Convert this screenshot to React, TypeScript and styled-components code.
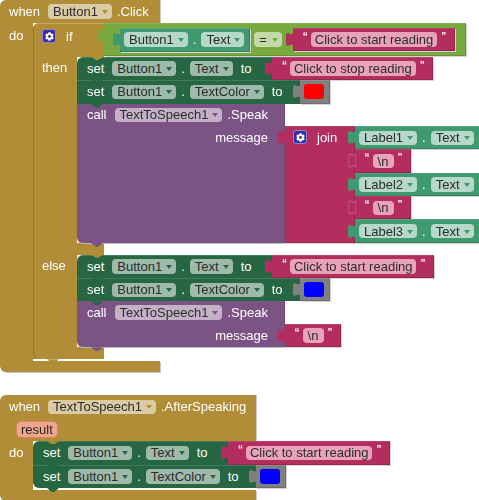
import React from "react";
import styled, { createGlobalStyle } from "styled-components";
import { FaCog } from "react-icons/fa";

const BROWN = "#b08d36";
const DARK_GREEN = "#266643";
const GET_GREEN = "#3f9a70";
const LOGIC_GREEN = "#78aa40";
const PURPLE = "#7c5385";
const PINK = "#b32d5e";
const GREY = "#808080";
const ROW = 23.33;

const GlobalStyle = createGlobalStyle`
  html, body {
    margin: 0;
    padding: 0;
    background: #fff;
  }
`;

const Canvas = styled.div`
  width: 479px;
  height: 500px;
  overflow: hidden;
  display: flex;
  flex-direction: column;
  gap: 23px;
  font-family: "Liberation Sans", Arial, sans-serif;
  font-size: 13px;
  color: #fff;
  filter: blur(0.3px);
`;

const Hat = styled.div`
  display: flex;
  flex-direction: column;
  align-items: flex-start;
`;

const HatHead = styled.div<{ $w: number; $h: number }>`
  width: ${(p) => p.$w}px;
  height: ${(p) => p.$h}px;
  background: ${BROWN};
  border-radius: 6px 0 0 0;
  box-shadow: 1px 0 0 #c9c9c9;
  padding-left: 6px;
  box-sizing: border-box;
`;

const HeadLine = styled.div`
  display: flex;
  align-items: center;
  gap: 5px;
  height: 23px;
`;

const ParamLine = styled.div`
  display: flex;
  padding: 3px 0 0 10px;
`;

const Param = styled.span`
  height: 15px;
  line-height: 15px;
  padding: 0 4px;
  background: #eda78f;
  border: 1px solid #e0805f;
  border-radius: 5px;
  color: #2b2320;
`;

const HatBody = styled.div`
  display: flex;
  align-items: flex-start;
`;

const Spine = styled.div<{ $w: number; $left: number; $top: number }>`
  width: ${(p) => p.$w}px;
  align-self: stretch;
  flex-shrink: 0;
  box-sizing: border-box;
  padding: ${(p) => p.$top}px 0 0 ${(p) => p.$left}px;
  background: ${BROWN};
`;

const HatFoot = styled.div<{ $w: number }>`
  width: ${(p) => p.$w}px;
  height: 11px;
  background: ${BROWN};
  border-radius: 0 0 0 6px;
  box-shadow: 1px 1px 0 #c9c9c9;
`;

const IfBlock = styled.div`
  position: relative;
  display: flex;
  flex-direction: column;
  align-items: flex-start;
  margin-bottom: 2px;
  &::before {
    content: "";
    position: absolute;
    left: 0;
    top: 0;
    width: 71px;
    bottom: 0;
    border-left: 1px solid #977826;
    border-radius: 6px 0 0 6px;
    pointer-events: none;
    z-index: 1;
  }
  &::after {
    content: "";
    position: absolute;
    left: 14px;
    bottom: -4px;
    width: 12px;
    height: 4px;
    background: ${BROWN};
    clip-path: polygon(0 0, 100% 0, 60% 100%, 40% 100%);
  }
`;

const IfRow = styled.div`
  display: flex;
  align-items: flex-start;
  height: 34px;
`;

const IfHead = styled.div`
  width: 71px;
  height: 34px;
  box-sizing: border-box;
  display: flex;
  align-items: flex-start;
  gap: 10px;
  padding: 5px 0 0 9px;
  background: ${BROWN};
  border-top: 1px solid #c5a85c;
  border-radius: 6px 0 0 0;
`;

const Gear = styled.span`
  width: 14px;
  height: 14px;
  display: flex;
  align-items: center;
  justify-content: center;
  flex-shrink: 0;
  background: #3a2ca6;
  border: 1px solid #8f86cf;
  box-sizing: border-box;
  border-radius: 3px;
  color: #fff;
  font-size: 9px;
`;

const Strip = styled.div`
  width: 71px;
  height: 12px;
  background: ${BROWN};
`;

const Clause = styled.div`
  display: flex;
  align-items: flex-start;
`;

const Stack = styled.div<{ $gapBelow?: number }>`
  display: flex;
  flex-direction: column;
  align-items: flex-start;
  margin-bottom: ${(p) => p.$gapBelow ?? 0}px;
`;

const Row = styled.div`
  display: flex;
  align-items: stretch;
`;

const Statement = styled.div<{ $bg: string; $tail: number; $first?: boolean; $last?: boolean }>`
  position: relative;
  height: ${ROW}px;
  box-sizing: border-box;
  display: flex;
  align-items: center;
  gap: 5px;
  padding: 0 ${(p) => p.$tail}px 0 7px;
  background: ${(p) => p.$bg};
  border-radius: ${(p) => (p.$first ? 6 : 0)}px 0 0 ${(p) => (p.$last ? 6 : 0)}px;
  box-shadow: inset 0 1px 0 rgba(255, 255, 255, 0.14);
  &::before {
    content: "";
    position: absolute;
    display: ${(p) => (p.$first ? "block" : "none")};
    left: 14px;
    top: 0;
    width: 12px;
    height: 3px;
    background: ${BROWN};
    clip-path: polygon(0 0, 100% 0, 60% 100%, 40% 100%);
  }
  &::after {
    content: "";
    position: absolute;
    left: 14px;
    bottom: -4px;
    width: 12px;
    height: 4px;
    z-index: 2;
    background: ${(p) => p.$bg};
    clip-path: polygon(0 0, 100% 0, 60% 100%, 40% 100%);
  }
`;

const CallBlock = styled.div`
  position: relative;
  width: 208px;
  box-sizing: border-box;
  display: flex;
  flex-direction: column;
  background: ${PURPLE};
  border-radius: 0 0 0 6px;
  box-shadow: inset -1px 0 0 rgba(0, 0, 0, 0.1), 0 1px 0 #bbb;
  &::after {
    content: "";
    position: absolute;
    left: 14px;
    bottom: -4px;
    width: 12px;
    height: 4px;
    z-index: 2;
    background: ${PURPLE};
    clip-path: polygon(0 0, 100% 0, 60% 100%, 40% 100%);
  }
`;

const CallHead = styled.div`
  height: 22.5px;
  display: flex;
  align-items: center;
  gap: 5px;
  padding-left: 7px;
`;

const MessageLine = styled.div`
  height: ${ROW}px;
  display: flex;
  align-items: center;
  justify-content: flex-end;
  padding-right: 17px;
`;

const Args = styled.div`
  margin-top: 22.5px;
  display: flex;
  align-items: stretch;
`;

const Value = styled.div<{ $bg: string; $h?: number; $pad?: string; $gap?: number }>`
  position: relative;
  height: ${(p) => (p.$h ? `${p.$h}px` : "auto")};
  box-sizing: border-box;
  display: flex;
  align-items: center;
  gap: ${(p) => p.$gap ?? 5}px;
  padding: ${(p) => p.$pad ?? "0"};
  background: ${(p) => p.$bg};
  box-shadow: inset 0 1px 0 rgba(255, 255, 255, 0.1), inset -1px -1px 0 rgba(0, 0, 0, 0.14), 1px 1px 0 #d4d4d4;
`;

const LogicValue = styled(Value)`
  margin-bottom: 1px;
`;

const JoinBlock = styled(Value)`
  width: 70px;
  align-items: flex-start;
  padding: 4px 0 0 8px;
  gap: 10px;
  height: auto;
`;

const JoinItems = styled.div`
  display: flex;
  flex-direction: column;
  align-items: flex-start;
`;

const TabShape = styled.svg`
  position: absolute;
  left: -7px;
  top: 4px;
  width: 8px;
  height: 15px;
  z-index: 3;
`;

const Kw = styled.span`
  margin: 0 3px;
  white-space: nowrap;
`;

const Dot = styled.span`
  white-space: nowrap;
`;

const RightLabel = styled.span`
  white-space: nowrap;
`;

const PillBox = styled.span<{ $tint: number }>`
  display: inline-flex;
  align-items: center;
  height: 14.5px;
  padding: 0 4px 0 5px;
  gap: 4px;
  white-space: nowrap;
  border-radius: 4px;
  background: rgba(255, 255, 255, ${(p) => p.$tint});
  color: #2c2c2c;
`;

const OperatorPill = styled(PillBox)`
  width: 28px;
  box-sizing: border-box;
  margin-right: 7px;
  justify-content: space-between;
`;

const Caret = styled.span<{ $c: string }>`
  width: 0;
  height: 0;
  margin-top: 1px;
  border-left: 3px solid transparent;
  border-right: 3px solid transparent;
  border-top: 4px solid ${(p) => p.$c};
`;

const Quote = styled.span`
  width: 4px;
  font-size: 10px;
  line-height: 10px;
  font-weight: bold;
  align-self: flex-start;
  margin-top: 4px;
  text-align: center;
`;

const StringText = styled.span`
  height: 14.5px;
  min-width: 21px;
  box-sizing: border-box;
  display: inline-flex;
  align-items: center;
  justify-content: center;
  padding: 0 4px;
  border-radius: 4px;
  white-space: nowrap;
  background: #e8a3bb;
  color: #2c2c2c;
`;

const Swatch = styled.span<{ $c: string }>`
  width: 20px;
  height: 15px;
  border-radius: 3px;
  background: ${(p) => p.$c};
`;

const Tab = ({ fill, stroke, top }: { fill: string; stroke?: string; top?: number }) => (
  <TabShape viewBox="0 0 8 15" style={top !== undefined ? { top } : undefined}>
    <path
      d="M8 1 C6 3 4 2 2 1 C1 1 0 2 0 3 L0 11 C0 13 1 14 2 14 C4 13 6 12 8 14 Z"
      fill={fill}
      stroke={stroke ?? "none"}
      strokeWidth="0.6"
    />
  </TabShape>
);

const Pill = ({ children, caret, tint = 0.55 }: { children: React.ReactNode; caret: string; tint?: number }) => (
  <PillBox $tint={tint}>
    {children}
    <Caret $c={caret} />
  </PillBox>
);

const Str = ({ text, h = ROW, outlined }: { text: string; h?: number; outlined?: boolean }) => (
  <Value $bg={PINK} $h={h} $pad="0 9.5px" $gap={4}>
    <Tab fill={PINK} stroke={outlined ? "#d88aa7" : undefined} />
    <Quote>“</Quote>
    <StringText>{text}</StringText>
    <Quote>”</Quote>
  </Value>
);

const ColorBlock = ({ color }: { color: string }) => (
  <Value $bg={GREY} $h={ROW} $pad="0 6px 0 4px">
    <Tab fill={GREY} />
    <Swatch $c={color} />
  </Value>
);

const GetBlock = ({ name, h, pad }: { name: string; h: number; pad: string }) => (
  <Value $bg={GET_GREEN} $h={h} $pad={pad}>
    <Tab fill={GET_GREEN} top={(h - 15) / 2} />
    <Pill caret={GET_GREEN} tint={0.62}>{name}</Pill>
    <Dot>.</Dot>
    <Pill caret={GET_GREEN} tint={0.62}>Text</Pill>
  </Value>
);

const SetLine = ({
  prop,
  tail,
  first,
  last,
  children,
}: {
  prop: string;
  tail: number;
  first?: boolean;
  last?: boolean;
  children: React.ReactNode;
}) => (
  <Row>
    <Statement $bg={DARK_GREEN} $tail={tail} $first={first} $last={last}>
      <Kw>set</Kw>
      <Pill caret={DARK_GREEN}>Button1</Pill>
      <Dot>.</Dot>
      <Pill caret={DARK_GREEN}>{prop}</Pill>
      <Kw>to</Kw>
    </Statement>
    {children}
  </Row>
);

const SpeakCall = ({ children }: { children: React.ReactNode }) => (
  <Row>
    <CallBlock>
      <CallHead>
        <Kw>call</Kw>
        <Pill caret={PURPLE}>TextToSpeech1</Pill>
        <Dot>.Speak</Dot>
      </CallHead>
      <MessageLine>
        <RightLabel>message</RightLabel>
      </MessageLine>
    </CallBlock>
    <Args>{children}</Args>
  </Row>
);

const App = () => (
  <>
    <GlobalStyle />
    <Canvas>
      <Hat>
        <HatHead $w={160} $h={23}>
          <HeadLine>
            <Kw>when</Kw>
            <Pill caret={BROWN}>Button1</Pill>
            <Dot>.Click</Dot>
          </HeadLine>
        </HatHead>
        <HatBody>
          <Spine $w={33} $left={9} $top={5}>do</Spine>
          <IfBlock>
            <IfRow>
              <IfHead>
                <Gear><FaCog /></Gear>
                <span>if</span>
              </IfHead>
              <LogicValue $bg={LOGIC_GREEN} $h={33} $pad="0 11px 0 16px" $gap={4}>
                <Tab fill={LOGIC_GREEN} top={5} />
                <GetBlock name="Button1" h={24} pad="0 6px 0 4px" />
                <OperatorPill $tint={0.55}>
                  =
                  <Caret $c={LOGIC_GREEN} />
                </OperatorPill>
                <Str text="Click to start reading" />
              </LogicValue>
            </IfRow>
            <Clause>
              <Spine $w={44} $left={9} $top={3}>then</Spine>
              <Stack>
                <SetLine prop="Text" tail={18} first>
                  <Str text="Click to stop reading" />
                </SetLine>
                <SetLine prop="TextColor" tail={14}>
                  <ColorBlock color="#ff0000" />
                </SetLine>
                <SpeakCall>
                  <JoinBlock $bg={PINK}>
                    <Tab fill={PINK} />
                    <Gear><FaCog /></Gear>
                    <span>join</span>
                  </JoinBlock>
                  <JoinItems>
                    <GetBlock name="Label1" h={ROW} pad="0 6px 0 4px" />
                    <Str text="\n" outlined />
                    <GetBlock name="Label2" h={ROW} pad="0 6px 0 4px" />
                    <Str text="\n" outlined />
                    <GetBlock name="Label3" h={ROW} pad="0 6px 0 4px" />
                  </JoinItems>
                </SpeakCall>
              </Stack>
            </Clause>
            <Strip />
            <Clause>
              <Spine $w={44} $left={9} $top={3}>else</Spine>
              <Stack>
                <SetLine prop="Text" tail={18} first>
                  <Str text="Click to start reading" />
                </SetLine>
                <SetLine prop="TextColor" tail={14}>
                  <ColorBlock color="#0000ff" />
                </SetLine>
                <SpeakCall>
                  <Str text="\n" />
                </SpeakCall>
              </Stack>
            </Clause>
            <Strip />
          </IfBlock>
        </HatBody>
        <HatFoot $w={160} />
      </Hat>
      <Hat>
        <HatHead $w={256} $h={46}>
          <HeadLine>
            <Kw>when</Kw>
            <Pill caret={BROWN}>TextToSpeech1</Pill>
            <Dot>.AfterSpeaking</Dot>
          </HeadLine>
          <ParamLine>
            <Param>result</Param>
          </ParamLine>
        </HatHead>
        <HatBody>
          <Spine $w={33} $left={9} $top={4}>do</Spine>
          <Stack $gapBelow={2}>
            <SetLine prop="Text" tail={18} first>
              <Str text="Click to start reading" />
            </SetLine>
            <SetLine prop="TextColor" tail={14} last>
              <ColorBlock color="#0000ff" />
            </SetLine>
          </Stack>
        </HatBody>
        <HatFoot $w={256} />
      </Hat>
    </Canvas>
  </>
);

export default App;
